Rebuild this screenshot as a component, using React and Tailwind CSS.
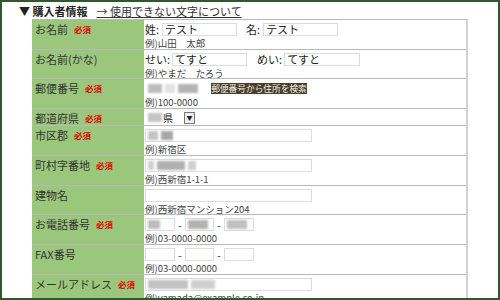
import React from "react";

const F = { fontFamily: '"Noto Sans CJK JP", "Noto Sans", sans-serif' };

function Req() {
  return <span className="ml-[6px] text-[8.5px] font-bold text-[#e30000] leading-[13px]">必須</span>;
}

function Label({ children, req }) {
  return (
    <div className="bg-[#9bc77d] border-b border-[#b9b9b9] pl-[3px] pt-[3px] overflow-hidden">
      <div className="h-[13px] flex items-center text-[11px] leading-[13px] text-[#333] whitespace-nowrap">
        <span>{children}</span>
        {req && <Req />}
      </div>
    </div>
  );
}

function Value({ children }) {
  return <div className="border-b border-[#b9b9b9] pl-[1px] pt-[3px] bg-white overflow-hidden">{children}</div>;
}

function Input({ w, children }) {
  return (
    <div className={`h-[13px] border border-[#dcdcdc] bg-white flex items-center pl-[2px] text-[11px] leading-[11px] text-[#222] ${w}`}>
      {children}
    </div>
  );
}

function Blur({ blocks }) {
  return (
    <div className="flex items-center gap-[3px] blur-[1px]">
      {blocks.map((b, i) => (
        <div key={i} className={`h-[9px] ${b}`} />
      ))}
    </div>
  );
}

function Ex({ children }) {
  return <div className="mt-[1px] h-[12px] text-[9.5px] leading-[12px] text-[#444] whitespace-nowrap">{children}</div>;
}

function Row({ children }) {
  return <div className="h-[13px] flex items-center text-[11px] leading-[13px] text-[#222]">{children}</div>;
}

export default function App() {
  return (
    <div style={F} className="w-[500px] h-[300px] border-2 border-[#2d5a2d] bg-white overflow-hidden">
      <div className="h-[17px] pl-[17px] pt-[1px] flex items-center text-[11px] leading-[13px] text-[#222]">
        <span className="font-bold">▼ 購入者情報</span>
        <span className="ml-[9px] underline text-[#333]">→ 使用できない文字について</span>
      </div>
      <div className="ml-[30px] w-[436px] border-t border-[#b9b9b9] border-r-2 border-r-[#d2d2d2] grid grid-cols-[112px_1fr] grid-rows-[30px_29px_30px_17px_30px_30px_29px_30px_30px_30px]">
        <Label req>お名前</Label>
        <Value>
          <Row>
            <span>姓:</span>
            <Input w="w-[75px] ml-[3px]">テスト</Input>
            <span className="ml-[9px]">名:</span>
            <Input w="w-[75px] ml-[3px]">テスト</Input>
          </Row>
          <Ex>例)山田　太郎</Ex>
        </Value>

        <Label>お名前(かな)</Label>
        <Value>
          <Row>
            <span>せい:</span>
            <Input w="w-[75px] ml-[2px]">てすと</Input>
            <span className="ml-[10px]">めい:</span>
            <Input w="w-[76px] ml-[2px]">てすと</Input>
          </Row>
          <Ex>例)やまだ　たろう</Ex>
        </Value>

        <Label req>郵便番号</Label>
        <Value>
          <Row>
            <div className="w-[63px] h-[13px] flex items-center pl-[3px] bg-white">
              <Blur blocks={["w-[14px] bg-[#bdbdbd]", "w-[10px] bg-[#e2e2e2]", "w-[20px] bg-[#b4b4b4]"]} />
            </div>
            <div className="ml-[3px] w-[96px] h-[11px] bg-[#4a3f2e] text-[#f4f0e6] text-[8.7px] leading-[11px] text-center whitespace-nowrap overflow-hidden">
              郵便番号から住所を検索
            </div>
          </Row>
          <Ex>例)100-0000</Ex>
        </Value>

        <Label req>都道府県</Label>
        <div className="border-b border-[#b9b9b9] pl-[1px] pt-[2px] bg-white overflow-hidden">
          <div className="w-[50px] h-[13px] flex items-center">
            <div className="flex items-center pl-[3px] w-[39px]">
              <Blur blocks={["w-[14px] bg-[#c4c4c4]"]} />
              <span className="text-[10px] leading-[12px] text-[#222] ml-[1px]">県</span>
            </div>
            <div className="w-[11px] h-[12px] border border-[#777] bg-[#eee] flex items-center justify-center text-[6px] leading-none text-[#222]">▼</div>
          </div>
        </div>

        <Label req>市区郡</Label>
        <Value>
          <Input w="w-[167px]">
            <Blur blocks={["w-[10px] bg-[#c4c4c4]", "w-[12px] bg-[#a8a8a8]"]} />
          </Input>
          <Ex>例)新宿区</Ex>
        </Value>

        <Label req>町村字番地</Label>
        <Value>
          <Input w="w-[167px]">
            <Blur blocks={["w-[6px] bg-[#cfcfcf]", "w-[28px] bg-[#b0b0b0]", "w-[8px] bg-[#cfcfcf]"]} />
          </Input>
          <Ex>例)西新宿1-1-1</Ex>
        </Value>

        <Label>建物名</Label>
        <Value>
          <Input w="w-[167px]" />
          <Ex>例)西新宿マンション204</Ex>
        </Value>

        <Label req>お電話番号</Label>
        <Value>
          <Row>
            <Input w="w-[30px]">
              <Blur blocks={["w-[12px] bg-[#bdbdbd]"]} />
            </Input>
            <span className="w-[10px] text-center text-[10px]">-</span>
            <Input w="w-[29px]">
              <Blur blocks={["w-[20px] bg-[#b3b3b3]"]} />
            </Input>
            <span className="w-[10px] text-center text-[10px]">-</span>
            <Input w="w-[30px]">
              <Blur blocks={["w-[20px] bg-[#c0c0c0]"]} />
            </Input>
          </Row>
          <Ex>例)03-0000-0000</Ex>
        </Value>

        <Label>FAX番号</Label>
        <Value>
          <Row>
            <Input w="w-[30px]" />
            <span className="w-[10px] text-center text-[10px]">-</span>
            <Input w="w-[29px]" />
            <span className="w-[10px] text-center text-[10px]">-</span>
            <Input w="w-[30px]" />
          </Row>
          <Ex>例)03-0000-0000</Ex>
        </Value>

        <Label req>メールアドレス</Label>
        <Value>
          <Input w="w-[167px]">
            <Blur blocks={["w-[40px] bg-[#c2c2c2]", "w-[24px] bg-[#cfcfcf]"]} />
          </Input>
          <Ex>例)yamada@example.co.jp</Ex>
        </Value>
      </div>
    </div>
  );
}
